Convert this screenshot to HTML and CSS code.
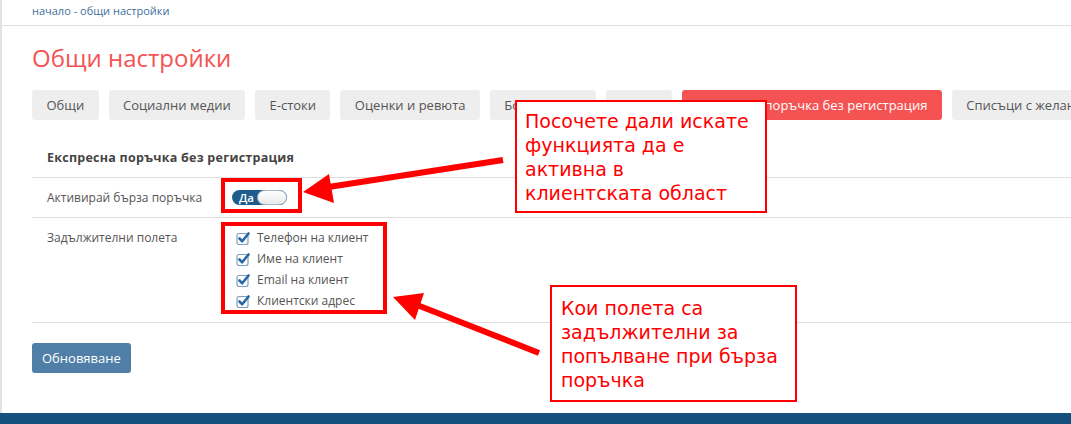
FILE: index.html
```html
<!DOCTYPE html>
<html lang="bg">
<head>
    <meta charset="UTF-8">
    <title>Общи настройки</title>
    <link rel="stylesheet" href="styles.css">
</head>
<body>
    <div class="page">
        <div class="crumbs">
            <a href="#">начало</a> - <a href="#">общи настройки</a>
        </div>

        <div class="content">
            <h1 class="page-title">Общи настройки</h1>

            <div class="tabs">
                <div class="tab">Общи</div>
                <div class="tab">Социални медии</div>
                <div class="tab">Е-стоки</div>
                <div class="tab">Оценки и ревюта</div>
                <div class="tab">Бонус точки</div>
                <div class="tab">Други</div>
                <div class="tab active">Експресна поръчка без регистрация</div>
                <div class="tab">Списъци с желания</div>
            </div>

            <div class="panel">
                <div class="panel-title">Експресна поръчка без регистрация</div>

                <div class="row">
                    <div class="row-label">Активирай бърза поръчка</div>
                    <div class="row-field">
                        <div class="toggle">
                            <span class="toggle-text">Да</span>
                            <span class="toggle-knob"></span>
                        </div>
                    </div>
                </div>

                <div class="row">
                    <div class="row-label">Задължителни полета</div>
                    <div class="row-field">
                        <ul class="checks">
                            <li><svg class="check" viewBox="0 0 14 14"><rect x="1" y="2.5" width="11" height="11" rx="2"/><path d="M3.5 7.5 L6.2 10.3 L12.5 2.5"/></svg>Телефон на клиент</li>
                            <li><svg class="check" viewBox="0 0 14 14"><rect x="1" y="2.5" width="11" height="11" rx="2"/><path d="M3.5 7.5 L6.2 10.3 L12.5 2.5"/></svg>Име на клиент</li>
                            <li><svg class="check" viewBox="0 0 14 14"><rect x="1" y="2.5" width="11" height="11" rx="2"/><path d="M3.5 7.5 L6.2 10.3 L12.5 2.5"/></svg>Email на клиент</li>
                            <li><svg class="check" viewBox="0 0 14 14"><rect x="1" y="2.5" width="11" height="11" rx="2"/><path d="M3.5 7.5 L6.2 10.3 L12.5 2.5"/></svg>Клиентски адрес</li>
                        </ul>
                    </div>
                </div>
            </div>

            <button class="save-btn">Обновяване</button>
        </div>
    </div>
    <div class="bottom-bar"></div>

    <!-- annotations drawn over the page -->
    <div class="mark mark-toggle"></div>
    <div class="mark mark-checks"></div>

    <svg class="arrows" width="1071" height="424" viewBox="0 0 1071 424">
        <line x1="503" y1="160" x2="322" y2="188"/>
        <polygon points="303,192 329,174 334,203"/>
        <line x1="539" y1="353" x2="412" y2="303"/>
        <polygon points="393,297 424,293 415,320"/>
    </svg>

    <div class="callout callout-top">
        Посочете дали искате<br>
        функцията да е<br>
        активна в<br>
        клиентската област
    </div>
    <div class="callout callout-bottom">
        Кои полета са<br>
        задължителни за<br>
        попълване при бърза<br>
        поръчка
    </div>
</body>
</html>
```

FILE: styles.css
```css
* {
    margin: 0;
    padding: 0;
    box-sizing: border-box;
}

body {
    font-family: 'Open Sans', 'Liberation Sans', sans-serif;
    background-color: #fff;
    color: #555;
    width: 1071px;
    height: 424px;
    overflow: hidden;
    position: relative;
}

.page {
    border-left: 2px solid #e2e2e2;
    height: 413px;
}

.crumbs {
    height: 26px;
    padding: 4px 0 0 30px;
    font-size: 11px;
    line-height: 14px;
    color: #3d6f9c;
    border-bottom: 1px solid #dedede;
}

.crumbs a {
    color: #3d6f9c;
    text-decoration: none;
}

.content {
    padding-left: 30px;
}

.page-title {
    margin-top: 17px;
    margin-bottom: 17px;
    font-size: 24px;
    line-height: 30px;
    font-weight: 400;
    color: #f55353;
}

.tabs {
    display: flex;
    gap: 10px;
    overflow: hidden;
    white-space: nowrap;
}

.tab {
    flex-shrink: 0;
    height: 30px;
    line-height: 30px;
    padding: 0 14.4px;
    font-size: 13px;
    color: #555;
    background-color: #eee;
    border-radius: 3px;
}

.tab.active {
    background-color: #f55353;
    color: #fff;
}

.panel-title {
    margin-top: 28px;
    padding: 0 15px 9px;
    font-size: 12.5px;
    line-height: 20px;
    font-weight: 700;
    letter-spacing: 0.25px;
    color: #444;
    border-bottom: 1px solid #ddd;
}

.row {
    display: flex;
    padding: 10px 15px;
    border-bottom: 1px solid #ddd;
    font-size: 12px;
}

.row-label {
    width: 185px;
    line-height: 19px;
}

.row + .row {
    padding: 9px 15px 11px;
}

.row + .row .row-label {
    line-height: 21px;
}

.toggle {
    margin-top: 2px;
    width: 55px;
    height: 15px;
    border-radius: 8px;
    background-color: #1f5b8d;
    position: relative;
}

.toggle-text {
    position: absolute;
    left: 7px;
    top: 0;
    font-size: 11.5px;
    font-weight: 600;
    line-height: 15px;
    color: #fff;
}

.toggle-knob {
    position: absolute;
    right: 0;
    top: 0;
    width: 30px;
    height: 15px;
    border-radius: 8px;
    border: 1px solid #a9b9c8;
    background: linear-gradient(#fff, #e9e9e9);
}

.checks {
    list-style: none;
    margin-left: 4px;
}

.checks li {
    display: flex;
    align-items: center;
    line-height: 21px;
    color: #555;
}

.check {
    width: 14px;
    height: 14px;
    margin-right: 7px;
}

.check rect {
    fill: #fff;
    stroke: #7f9dbc;
    stroke-width: 1.2;
}

.check path {
    fill: none;
    stroke: #2767a3;
    stroke-width: 2.6;
    stroke-linecap: round;
    stroke-linejoin: round;
}

.save-btn {
    margin-top: 20px;
    height: 30px;
    padding: 0 10px;
    font-family: 'Open Sans', 'Liberation Sans', sans-serif;
    font-size: 13px;
    color: #fff;
    background-color: #4f7fa6;
    border: none;
    border-radius: 3px;
}

.bottom-bar {
    height: 11px;
    background-color: #13507d;
}

/* annotation layer */
.mark {
    position: absolute;
    border: 4px solid #f00;
}

.mark-toggle {
    left: 221px;
    top: 178px;
    width: 81px;
    height: 35px;
}

.mark-checks {
    left: 221px;
    top: 222px;
    width: 166px;
    height: 92px;
}

.arrows {
    position: absolute;
    left: 0;
    top: 0;
    pointer-events: none;
}

.arrows line {
    stroke: #f00;
    stroke-width: 6;
}

.arrows polygon {
    fill: #f00;
}

.callout {
    position: absolute;
    background-color: #fff;
    border: 2px solid #f00;
    font-family: 'DejaVu Sans', sans-serif;
    font-size: 19px;
    line-height: 24px;
    color: #f00;
    white-space: nowrap;
}

.callout-top {
    left: 515px;
    top: 100px;
    width: 252px;
    height: 113px;
    padding: 7px 8px;
}

.callout-bottom {
    left: 550px;
    top: 285px;
    width: 247px;
    height: 117px;
    padding: 9px 9px;
}
```
